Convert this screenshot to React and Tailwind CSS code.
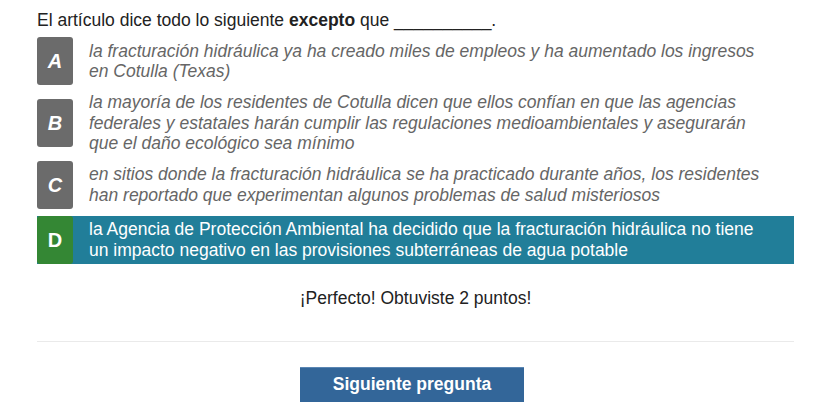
import React from "react";

const OPTIONS = [
  {
    letter: "A",
    text: "la fracturación hidráulica ya ha creado miles de empleos y ha aumentado los ingresos en Cotulla (Texas)",
  },
  {
    letter: "B",
    text: "la mayoría de los residentes de Cotulla dicen que ellos confían en que las agencias federales y estatales harán cumplir las regulaciones medioambientales y asegurarán que el daño ecológico sea mínimo",
  },
  {
    letter: "C",
    text: "en sitios donde la fracturación hidráulica se ha practicado durante años, los residentes han reportado que experimentan algunos problemas de salud misteriosos",
  },
  {
    letter: "D",
    text: "la Agencia de Protección Ambiental ha decidido que la fracturación hidráulica no tiene un impacto negativo en las provisiones subterráneas de agua potable",
    correct: true,
  },
];

export default function App() {
  return (
    <div
      className="min-h-[407px] bg-white text-[17.5px] text-[#222]"
      style={{ fontFamily: '"Liberation Sans", Arial, sans-serif' }}
    >
      <div className="ml-[37px] w-[757px] pt-[10px]">
        {/* Question */}
        <p className="leading-[20px]">
          El artículo dice todo lo siguiente <b>excepto</b> que __________.
        </p>

        {/* Options */}
        <div className="mt-[7px] flex flex-col gap-[7px]">
          {OPTIONS.map((o) =>
            o.correct ? (
              <div key={o.letter} className="flex items-center bg-[#217e99]">
                <div className="flex h-[48px] w-[36px] shrink-0 items-center justify-center rounded-[3px] bg-[#348734] text-[20px] font-bold text-white">
                  {o.letter}
                </div>
                <div className="pl-[16px] pr-[24px] leading-[21px] text-white">
                  {o.text}
                </div>
              </div>
            ) : (
              <div key={o.letter} className="flex items-center">
                <div className="flex h-[48px] w-[36px] shrink-0 items-center justify-center rounded-[3px] bg-[#6b6b6b] text-[20px] font-bold italic text-white">
                  {o.letter}
                </div>
                <div className="pl-[16px] pr-[24px] italic leading-[20.5px] text-[#666]">
                  {o.text}
                </div>
              </div>
            )
          )}
        </div>

        {/* Feedback */}
        <p className="mt-[24px] text-center leading-[20px]">
          ¡Perfecto! Obtuviste 2 puntos!
        </p>

        <div className="mt-[33px] h-px bg-[#eaeaea]" />

        <div className="mt-[25px] flex justify-center pr-[7px]">
          <button className="h-[35px] w-[224px] border-t border-[#5a86b3] bg-[#336699] font-bold text-white">
            Siguiente pregunta
          </button>
        </div>
      </div>
    </div>
  );
}
